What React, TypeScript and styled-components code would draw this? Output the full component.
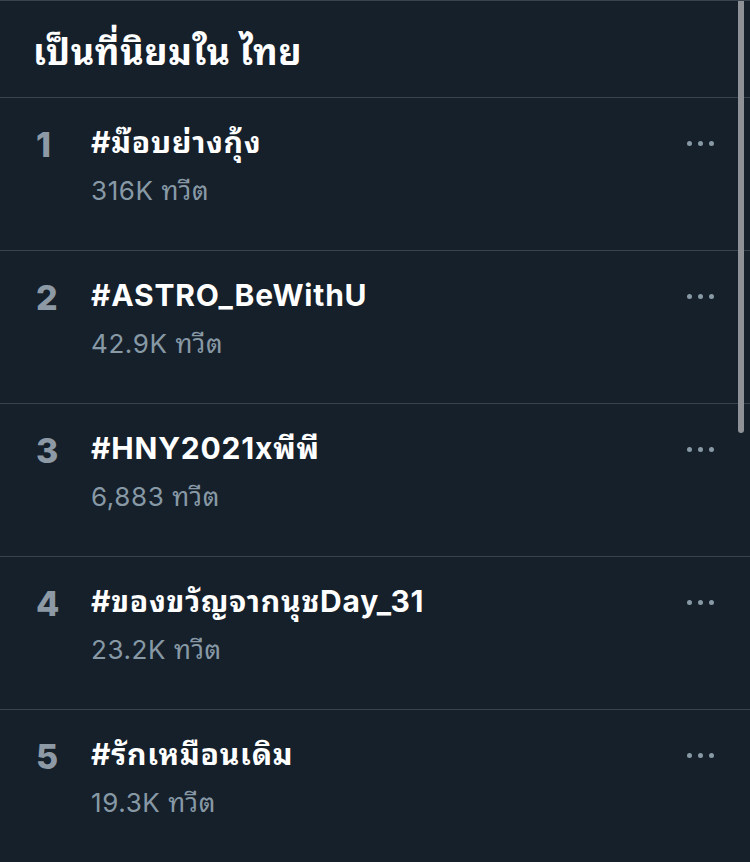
import React from "react";
import styled, { createGlobalStyle } from "styled-components";

type Trend = { rank: number; tag: string; count: string };

const trends: Trend[] = [
	{ rank: 1, tag: "#ม๊อบย่างกุ้ง", count: "316K ทวีต" },
	{ rank: 2, tag: "#ASTRO_BeWithU", count: "42.9K ทวีต" },
	{ rank: 3, tag: "#HNY2021xพีพี", count: "6,883 ทวีต" },
	{ rank: 4, tag: "#ของขวัญจากนุชDay_31", count: "23.2K ทวีต" },
	{ rank: 5, tag: "#รักเหมือนเดิม", count: "19.3K ทวีต" },
];

export default function App() {
	return (
		<>
			<GlobalStyle />
			<Page>
				<Header>
					<Title>เป็นที่นิยมใน ไทย</Title>
				</Header>
				{trends.map((t) => (
					<Row key={t.rank}>
						<Rank>{t.rank}</Rank>
						<Body>
							<Tag>{t.tag}</Tag>
							<Count>{t.count}</Count>
						</Body>
						<More aria-label="more">
							<Dot />
							<Dot />
							<Dot />
						</More>
					</Row>
				))}
				<ScrollThumb />
			</Page>
		</>
	);
}

const GlobalStyle = createGlobalStyle`
  html, body {
    margin: 0;
    padding: 0;
    background: #15202b;
  }
  body {
    font-family: Inter, "Noto Sans Thai Looped", "Noto Sans Thai", "Noto Sans", sans-serif;
    -webkit-font-smoothing: antialiased;
  }
`;

const Page = styled.div`
  position: relative;
  width: 750px;
  height: 862px;
  overflow: hidden;
  background: #15202b;
  border-top: 1px solid #38444d;
  box-sizing: border-box;
`;

const Header = styled.div`
  height: 97px;
  display: flex;
  align-items: center;
  padding-left: 33px;
  border-bottom: 1px solid #38444d;
  box-sizing: border-box;
`;

const Title = styled.h1`
  margin: 0;
  color: #ffffff;
  font-size: 36px;
  font-weight: 700;
  letter-spacing: 0.6px;
`;

const Row = styled.div`
  display: grid;
  grid-template-columns: 53px 1fr 80px;
  height: 153px;
  padding-left: 36px;
  border-bottom: 1px solid #38444d;
  box-sizing: border-box;
`;

const Rank = styled.div`
  padding-top: 27px;
  color: #8d9aa6;
  font-size: 34px;
  font-weight: 800;
  line-height: 40px;
`;

const Body = styled.div`
  display: flex;
  flex-direction: column;
  padding-top: 24px;
  padding-left: 2px;
`;

const Tag = styled.div`
  color: #ffffff;
  font-size: 30px;
  font-weight: 700;
  line-height: 40px;
  letter-spacing: 0.8px;
`;

const Count = styled.div`
  margin-top: 13px;
  color: #8899a6;
  font-size: 26px;
  line-height: 32px;
  letter-spacing: 0.6px;
`;

const More = styled.div`
  display: flex;
  gap: 6px;
  padding-top: 43px;
  padding-left: 17px;
`;

const Dot = styled.span`
  width: 5px;
  height: 5px;
  border-radius: 50%;
  background: #8899a6;
`;

const ScrollThumb = styled.div`
  position: absolute;
  top: 0;
  right: 6px;
  width: 6px;
  height: 432px;
  border-radius: 0 0 3px 3px;
  background: #8e9297;
`;
